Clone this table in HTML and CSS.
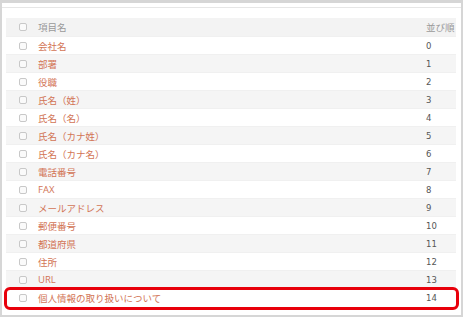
FILE: index.html
```html
<!DOCTYPE html>
<html lang="ja">
<head>
<meta charset="utf-8">
<link rel="stylesheet" href="styles.css">
</head>
<body>
<div class="frame">
  <div class="topbar"></div>
  <div class="panel">
    <div class="table">
      <div class="row head"><span class="cb"></span><span class="name">項目名</span><span class="ord">並び順</span></div>
      <div class="row"><span class="cb"></span><span class="name link">会社名</span><span class="ord">0</span></div>
      <div class="row alt"><span class="cb"></span><span class="name link">部署</span><span class="ord">1</span></div>
      <div class="row"><span class="cb"></span><span class="name link">役職</span><span class="ord">2</span></div>
      <div class="row alt"><span class="cb"></span><span class="name link">氏名（姓）</span><span class="ord">3</span></div>
      <div class="row"><span class="cb"></span><span class="name link">氏名（名）</span><span class="ord">4</span></div>
      <div class="row alt"><span class="cb"></span><span class="name link">氏名（カナ姓）</span><span class="ord">5</span></div>
      <div class="row"><span class="cb"></span><span class="name link">氏名（カナ名）</span><span class="ord">6</span></div>
      <div class="row alt"><span class="cb"></span><span class="name link">電話番号</span><span class="ord">7</span></div>
      <div class="row"><span class="cb"></span><span class="name link">FAX</span><span class="ord">8</span></div>
      <div class="row alt"><span class="cb"></span><span class="name link">メールアドレス</span><span class="ord">9</span></div>
      <div class="row"><span class="cb"></span><span class="name link">郵便番号</span><span class="ord">10</span></div>
      <div class="row alt"><span class="cb"></span><span class="name link">都道府県</span><span class="ord">11</span></div>
      <div class="row"><span class="cb"></span><span class="name link">住所</span><span class="ord">12</span></div>
      <div class="row alt"><span class="cb"></span><span class="name link">URL</span><span class="ord">13</span></div>
      <div class="row last"><span class="cb"></span><span class="name link">個人情報の取り扱いについて</span><span class="ord">14</span>
        <div class="highlight"></div>
      </div>
    </div>
  </div>
</div>
</body>
</html>
```
FILE: styles.css
```css
* { box-sizing: border-box; }
html, body { margin: 0; padding: 0; background: #fff; }
body {
  width: 463px;
  height: 318px;
  overflow: hidden;
  font-family: "Open Sans", "Noto Sans CJK JP", sans-serif;
  font-size: 9.5px;
}
.frame {
  width: 463px;
  height: 317px;
  border-left: 2px solid #d6d6d6;
  border-right: 2px solid #d6d6d6;
  border-bottom: 2px solid #d6d6d6;
  display: flex;
  flex-direction: column;
}
.topbar {
  height: 3px;
  background: #d6d6d6;
}
.panel {
  border-top: 1px solid #e6e6e6;
  margin-top: 4px;
  padding: 10px 5px 0 4px;
  flex: 1;
}
.table {
  display: flex;
  flex-direction: column;
}
.row {
  position: relative;
  height: 18px;
  display: flex;
  align-items: center;
  border-top: 1px solid #f0f0f0;
  color: #555;
}
.row.head {
  background: #f3f3f3;
  border-top: none;
  color: #999;
}
.row.alt { background: #f5f5f5; }
.cb {
  width: 8px;
  height: 8px;
  border: 1px solid #c8c8c8;
  border-radius: 2px;
  background: #fafafa;
  margin-left: 13px;
  flex: none;
}
.name {
  margin-left: 11px;
  flex: 1;
}
.link { color: #d27455; }
.ord {
  width: 30px;
  color: #555;
  font-family: "DejaVu Sans", sans-serif;
  font-size: 8.5px;
}
.head .ord { color: #999; font-family: "Open Sans", "Noto Sans CJK JP", sans-serif; font-size: 9.5px; }
.highlight {
  position: absolute;
  left: -2px;
  right: -3px;
  top: -2px;
  bottom: -4px;
  border: 3px solid #e8000b;
  border-radius: 6px;
}
```
